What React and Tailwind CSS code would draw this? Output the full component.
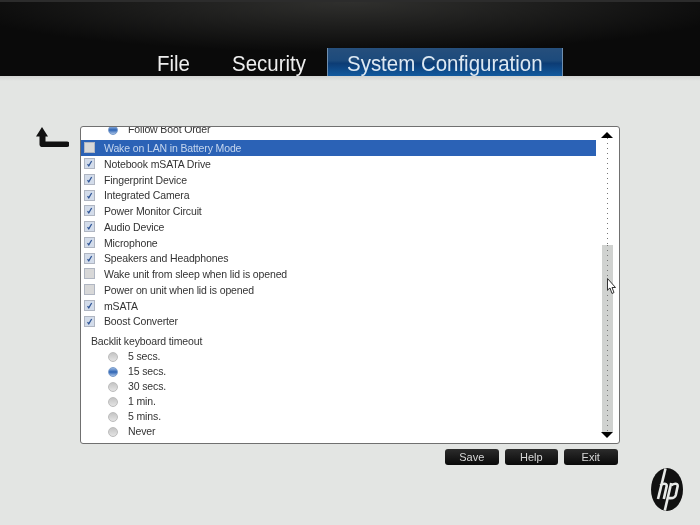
const deviceRows = [
  { label: 'Wake on LAN in Battery Mode', checked: false, selected: true },
  { label: 'Notebook mSATA Drive', checked: true },
  { label: 'Fingerprint Device', checked: true },
  { label: 'Integrated Camera', checked: true },
  { label: 'Power Monitor Circuit', checked: true },
  { label: 'Audio Device', checked: true },
  { label: 'Microphone', checked: true },
  { label: 'Speakers and Headphones', checked: true },
  { label: 'Wake unit from sleep when lid is opened', checked: false },
  { label: 'Power on unit when lid is opened', checked: false },
  { label: 'mSATA', checked: true },
  { label: 'Boost Converter', checked: true },
];

const timeouts = ['5 secs.', '15 secs.', '30 secs.', '1 min.', '5 mins.', 'Never'];

function Checkbox({ checked }) {
  return (
    <span className={`flex h-[11px] w-[11px] shrink-0 items-center justify-center border border-[#b0b6c2] ${checked ? 'bg-[#d3dcea]' : 'bg-[#d8d8d8]'}`}>
      {checked && (
        <svg viewBox="0 0 10 10" className="h-[9px] w-[9px]">
          <path d="M2.8 5.8 L4.2 7.6 L7.4 2.2" fill="none" stroke="#2f5597" strokeWidth="1.4" />
        </svg>
      )}
    </span>
  );
}

function Radio({ on }) {
  return (
    <span className={`block h-[10px] w-[10px] shrink-0 rounded-full border ${on ? 'border-[#7b9dcc] bg-gradient-to-b from-[#9ab8e0] via-[#2d64b4] to-[#a8c2e6]' : 'border-[#bcbcbc] bg-gradient-to-b from-[#c4c4c4] to-[#e4e4e4]'}`} />
  );
}

function DeviceRow({ label, checked, selected }) {
  return (
    <div className={`flex h-[15.75px] items-center pl-[3px] ${selected ? 'bg-[#2b62b6] text-[#c5d6ee]' : 'text-[#333333]'}`}>
      <Checkbox checked={checked} />
      <span className="ml-[9px] translate-y-[0.5px]">{label}</span>
    </div>
  );
}

function RadioRow({ label, on }) {
  return (
    <div className="flex h-[15px] items-center pl-[27px] text-[#333333]">
      <Radio on={on} />
      <span className="ml-[10px]">{label}</span>
    </div>
  );
}

function DottedTrack({ className }) {
  return (
    <div className={`w-px bg-[repeating-linear-gradient(to_bottom,#777777_0,#777777_1px,transparent_1px,transparent_5px)] ${className}`} />
  );
}

function Scrollbar() {
  return (
    <div className="flex w-[23px] flex-col items-center pt-[5px] pb-[5px] pr-[1px]">
      <svg viewBox="0 0 12 6" className="h-[6px] w-[12px] shrink-0">
        <path d="M6 0 L12 6 L0 6 Z" fill="#000000" />
      </svg>
      <DottedTrack className="h-[107px] shrink-0" />
      <div className="flex w-[11px] flex-1 justify-center bg-[#d0d2d0]">
        <DottedTrack className="h-full" />
      </div>
      <svg viewBox="0 0 12 6" className="h-[6px] w-[12px] shrink-0">
        <path d="M0 0 L12 0 L6 6 Z" fill="#000000" />
      </svg>
    </div>
  );
}

function FooterButton({ children }) {
  return (
    <button className="h-[16px] w-[53.5px] rounded-[3px] bg-gradient-to-b from-[#2c2c2c] to-[#0a0a0a] text-[11px] leading-[16px] text-[#d8d8d8]">
      {children}
    </button>
  );
}

function HpLogo() {
  return (
    <svg viewBox="0 0 32 43" className="h-[43px] w-[32px]">
      <ellipse cx="16" cy="21.5" rx="16" ry="21.5" fill="#111111" />
      <g fill="none" stroke="#e8eae8" strokeWidth="2.6">
        <path d="M14.5 0.5 L7 31" />
        <path d="M9.5 17.5 C11 15.5 16 14.5 15.7 18 L12.8 31" />
        <path d="M20.2 15 L13.8 42.5" />
        <path d="M20.5 17.5 C22 15.5 27 14.5 26.7 18 L24.8 27 C24 30 21 30.5 17.5 30" />
      </g>
    </svg>
  );
}

export default function App() {
  return (
    <div className="relative flex h-[525px] w-[700px] flex-col overflow-hidden bg-[#e3e5e3] font-['Liberation_Sans',Arial,sans-serif] blur-[0.4px]">
      <header className="flex h-[76px] shrink-0 items-end border-t-2 border-[#2c2c2c] bg-[radial-gradient(ellipse_400px_50px_at_50%_0%,#30302e_0%,#0a0a0a_100%)] pl-[157px] text-[22px] text-[#eeeeee]">
        <div className="h-[28px] w-[75px] leading-[31px]">
          <span className="inline-block origin-left scale-x-[0.93]">File</span>
        </div>
        <div className="h-[28px] w-[95px] leading-[31px]">
          <span className="inline-block origin-left scale-x-[0.93]">Security</span>
        </div>
        <div className="h-[28px] w-[236px] border-x border-[#6f8fb0] bg-[linear-gradient(to_bottom,#264f7c_0%,#1c4a7c_45%,#0c3c75_55%,#125a9e_100%)] pl-[19px] leading-[31px] text-[#dde8f2]">
          <span className="inline-block origin-left scale-x-[0.93] whitespace-nowrap">System Configuration</span>
        </div>
      </header>

      <main className="flex flex-1 flex-col bg-[linear-gradient(to_bottom,#d2d4d2_0,#e3e5e3_5px)] pt-[50px]">
        <div className="flex">
          <div className="w-[80px] shrink-0 pl-[36px] pt-[1px]">
            <svg viewBox="0 0 33 20" className="h-[20px] w-[33px]">
              <path d="M6 0 L12 9.5 H9.5 V14.5 H31 A2.5 2.5 0 0 1 31 20 H6.5 A2.5 2.5 0 0 1 3.5 17.5 V9.5 H0 Z" fill="#111111" />
            </svg>
          </div>

          <section className="flex h-[318px] w-[540px] overflow-hidden rounded-[3px] border border-[#707070] bg-white text-[10.5px] tracking-[-0.13px]">
            <div className="flex-1">
              <div className="-mt-[5px] mb-[3px]">
                <RadioRow label="Follow Boot Order" on />
              </div>
              {deviceRows.map((row) => (
                <DeviceRow key={row.label} {...row} />
              ))}
              <div className="mt-[5px] h-[15px] pl-[10px] leading-[15px] text-[#333333]">Backlit keyboard timeout</div>
              <div className="mt-[0.5px]">
                {timeouts.map((t) => (
                  <RadioRow key={t} label={t} on={t === '15 secs.'} />
                ))}
              </div>
            </div>
            <Scrollbar />
          </section>
        </div>

        <div className="mt-[5px] flex gap-[6px] pl-[445px]">
          <FooterButton>Save</FooterButton>
          <FooterButton>Help</FooterButton>
          <FooterButton>Exit</FooterButton>
        </div>

        <div className="mt-[3px] flex justify-end pr-[17px]">
          <HpLogo />
        </div>
      </main>

      {/* mouse pointer sits over the scrollbar */}
      <svg viewBox="0 0 10 17" className="absolute left-[607px] top-[278px] h-[17px] w-[10px]">
        <path d="M0.5 0.5 L0.5 12 L3 10 L5 15.5 L7 14.5 L5 9.5 L8.5 9.5 Z" fill="#ffffff" stroke="#333333" strokeWidth="1" />
      </svg>
    </div>
  );
}
